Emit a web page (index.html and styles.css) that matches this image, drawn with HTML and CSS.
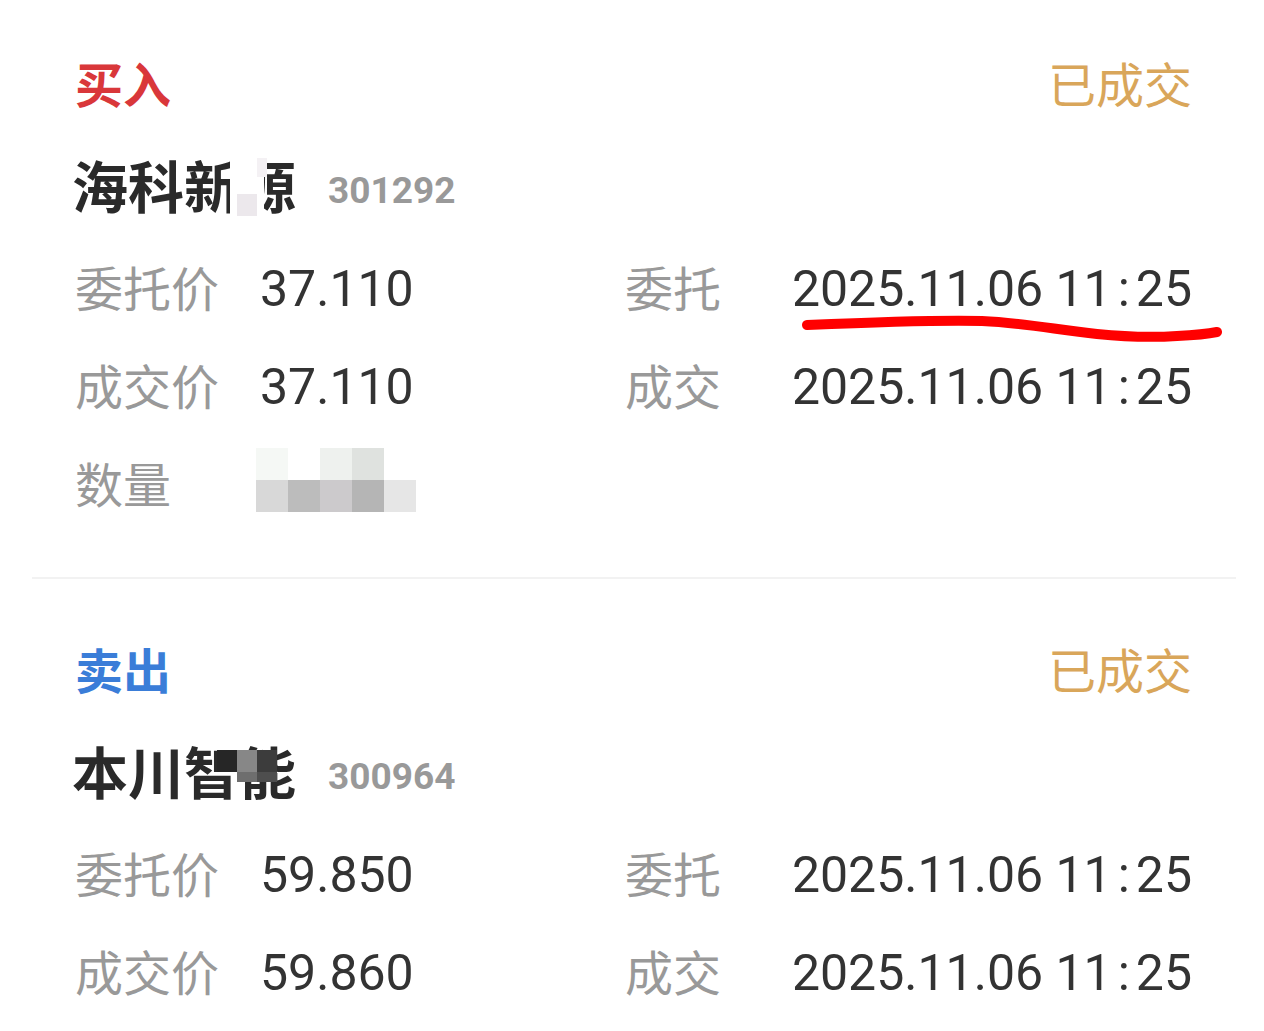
FILE: index.html
```html
<!DOCTYPE html>
<html>
<head>
    <title>委托记录</title>
    <link rel="stylesheet" href="styles.css">
</head>
<body>
    <div class="page">
        <div class="order">
            <div class="order-head">
                <span class="side buy">买入</span>
                <span class="status">已成交</span>
            </div>
            <div class="order-name">
                <span class="name">海科新源</span>
                <span class="code">301292</span>
                <!-- 打码 -->
                <span class="mask mask-white"></span>
                <span class="mask mask-pale"></span>
                <span class="mask mask-pale-top"></span>
            </div>
            <div class="order-grid">
                <div class="label">委托价</div>
                <div class="value">37.110</div>
                <div class="label">委托</div>
                <div class="value time">2025.11.06 11<span class="colon">:</span>25</div>

                <div class="label">成交价</div>
                <div class="value">37.110</div>
                <div class="label">成交</div>
                <div class="value time">2025.11.06 11<span class="colon">:</span>25</div>

                <div class="label">数量</div>
                <div class="value">
                    <div class="mosaic">
                        <span class="t1"></span><span class="t2"></span><span class="t3"></span><span class="t4"></span><span class="t5"></span>
                        <span class="t6"></span><span class="t7"></span><span class="t8"></span><span class="t9"></span><span class="t10"></span>
                    </div>
                </div>
            </div>
        </div>

        <div class="order">
            <div class="order-head">
                <span class="side sell">卖出</span>
                <span class="status">已成交</span>
            </div>
            <div class="order-name">
                <span class="name">本川智能</span>
                <span class="code">300964</span>
                <span class="mask dark-a"></span>
                <span class="mask dark-b"></span>
                <span class="mask dark-c"></span>
                <span class="mask dark-d"></span>
                <span class="mask dark-e"></span>
            </div>
            <div class="order-grid">
                <div class="label">委托价</div>
                <div class="value">59.850</div>
                <div class="label">委托</div>
                <div class="value time">2025.11.06 11<span class="colon">:</span>25</div>

                <div class="label">成交价</div>
                <div class="value">59.860</div>
                <div class="label">成交</div>
                <div class="value time">2025.11.06 11<span class="colon">:</span>25</div>
            </div>
        </div>

        <!-- 手写标注 -->
        <svg class="scribble" width="430" height="34" viewBox="0 0 430 34">
            <path d="M10 12 C 80 9, 150 7, 185 8 C 230 10, 260 17, 300 21 C 330 24, 350 25, 380 23 C 400 22, 415 20, 420 19"
                  fill="none" stroke="#ff0000" stroke-width="10" stroke-linecap="round"/>
        </svg>
    </div>
</body>
</html>
```

FILE: styles.css
```css
body {
    margin: 0;
    background: #ffffff;
    font-family: 'Noto Sans CJK SC', 'Noto Sans', sans-serif;
    color: #333333;
}

.page {
    position: relative;
    padding: 0 28px 0 32px;
}

.order {
    padding: 36px 44px 43px 43px;
}

.order + .order {
    border-top: 2px solid #f2f2f2;
    padding-top: 43px;
}

.order-head {
    height: 100px;
    display: flex;
    align-items: center;
    justify-content: space-between;
}

.side {
    font-size: 48px;
    font-weight: bold;
    padding-bottom: 9px;
}

.buy { color: #d9373a; }
.sell { color: #3a7dd8; }

.status {
    font-size: 48px;
    color: #d9a65a;
    padding-bottom: 9px;
}

.order-name {
    position: relative;
    height: 104px;
    display: flex;
    align-items: center;
}

.name {
    font-size: 56px;
    font-weight: bold;
    color: #2a2a2a;
    padding-bottom: 10px;
    margin-left: -3px;
}

.code {
    margin-left: 32px;
    font-family: Roboto, 'Noto Sans', sans-serif;
    font-size: 37px;
    font-weight: bold;
    color: #999999;
    padding-top: 4px;
}

.mask {
    position: absolute;
}

.mask-white { left: 155px; top: 18px; width: 34px; height: 66px; background: #ffffff; }
.mask-pale { left: 162px; top: 58px; width: 20px; height: 22px; background: #ece8ec; }
.mask-pale-top { left: 182px; top: 22px; width: 10px; height: 19px; background: #f4f1f4; }

.dark-a { left: 142px; top: 28px; width: 20px; height: 22px; background: #262626; }
.dark-b { left: 162px; top: 28px; width: 20px; height: 22px; background: #878787; }
.dark-c { left: 182px; top: 28px; width: 20px; height: 22px; background: #3c3c3c; }
.dark-d { left: 162px; top: 50px; width: 20px; height: 10px; background: #6e6e6e; }
.dark-e { left: 182px; top: 50px; width: 20px; height: 10px; background: #4e4e4e; }

.order-grid {
    display: grid;
    grid-template-columns: 187px 363px 1fr auto;
    grid-auto-rows: 98px;
    align-items: center;
}

.label {
    font-size: 48px;
    color: #999999;
    padding-bottom: 7px;
}

.value {
    font-family: Roboto, 'Noto Sans', sans-serif;
    font-size: 50px;
    color: #333333;
    margin-left: -2px;
}

.time {
    justify-self: end;
}

.colon {
    margin: 0 6px;
}

.mosaic {
    margin-left: -4px;
    margin-bottom: 10px;
    display: grid;
    grid-template-columns: repeat(5, 32px);
    grid-auto-rows: 32px;
}

.t1 { background: #f5f8f5; }
.t2 { background: #ffffff; }
.t3 { background: #eef1ee; }
.t4 { background: #dfe2df; }
.t5 { background: #ffffff; }
.t6 { background: #d8d8d8; }
.t7 { background: #bcbcbc; }
.t8 { background: #cccacc; }
.t9 { background: #b5b5b5; }
.t10 { background: #e6e6e6; }

.scribble {
    position: absolute;
    left: 797px;
    top: 313px;
}
```
